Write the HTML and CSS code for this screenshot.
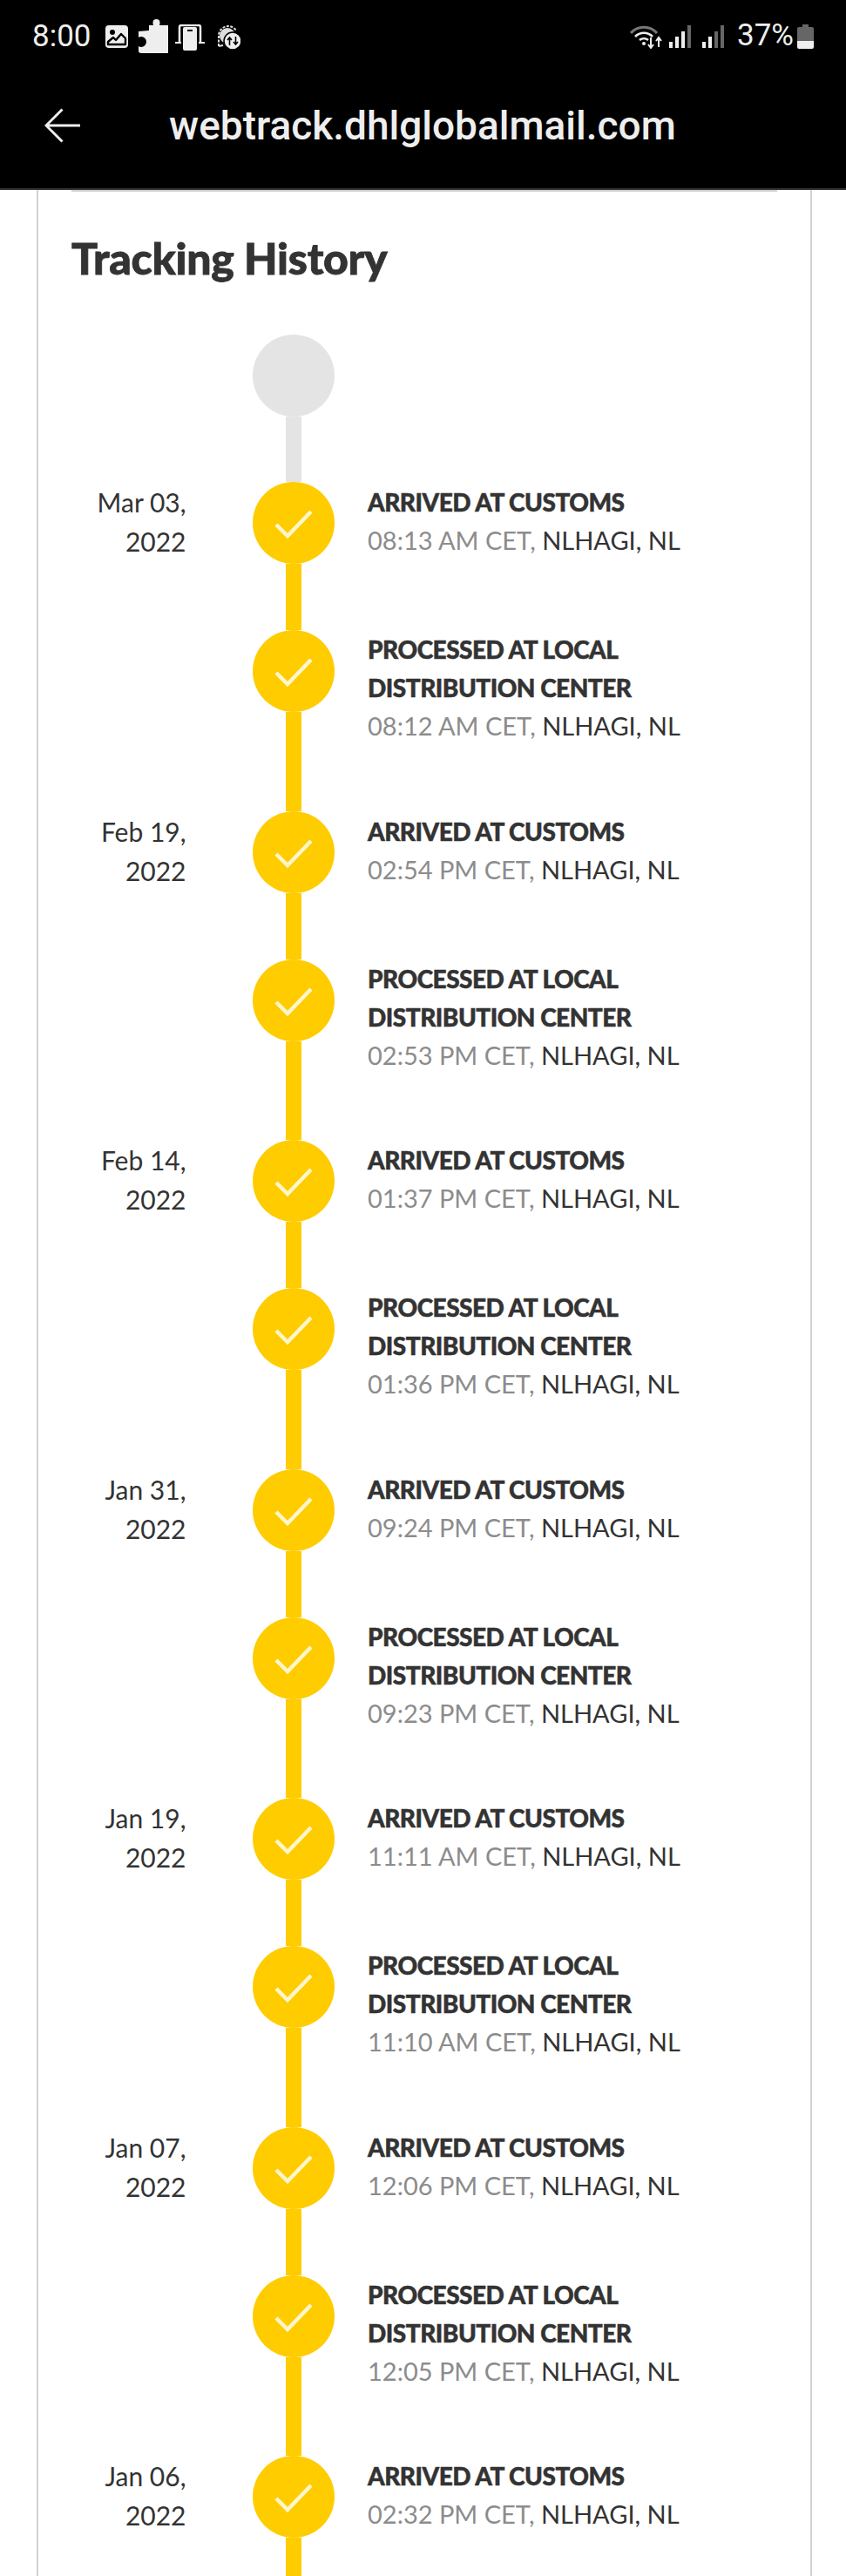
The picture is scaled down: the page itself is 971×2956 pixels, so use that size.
FILE: index.html
```html
<!DOCTYPE html>
<html lang="en">
<head>
<meta charset="utf-8">
<title>Tracking History</title>
<link rel="stylesheet" href="styles.css">
</head>
<body>
<header class="appbar">
  <div class="status">
    <div class="status-left">
      <span class="clock">8:00</span>
      <svg class="ico ico-img" viewBox="0 0 26 26"><rect width="26" height="26" rx="4" fill="#eee"/><circle cx="8" cy="8" r="3" fill="#000"/><path d="M3 22v-3l6-5 3 3 6-7 5 5v7z" fill="none" stroke="#000" stroke-width="2.4" stroke-linejoin="round"/></svg>
      <svg class="ico ico-puzzle" viewBox="0 0 34 39"><path d="M12 7h5a5.500 5.500 0 0 1-.5-3a4 4 0 0 1 8 0a5.500 5.500 0 0 1-.5 3h10v32H3a3 3 0 0 1-3-3v-5a6 6 0 0 0 3 1a6 6 0 0 0 0-12a6 6 0 0 0-3 1v-7l12-1z" fill="#eee"/></svg>
      <svg class="ico ico-phone" viewBox="0 0 34 30"><path d="M5 21V3a2 2 0 0 1 2-2h20a2 2 0 0 1 2 2v18" fill="none" stroke="#eee" stroke-width="2.500"/><rect x="9" y="3" width="16" height="27" rx="2" fill="#eee"/><rect x="14" y="6" width="6" height="2" fill="#000"/><path d="M0 21h7M27 21h7" stroke="#eee" stroke-width="2"/></svg>
      <svg class="ico ico-chat" viewBox="0 0 29 29"><path d="M4 25V13A11 11 0 0 1 15 2a11 11 0 0 1 9 5" fill="none" stroke="#ddd" stroke-width="2" stroke-dasharray="3 1.500"/><path d="M4 25l5-1" stroke="#ddd" stroke-width="2"/><circle cx="14" cy="13" r="9" fill="#ddd"/><circle cx="20" cy="19" r="10" fill="#eee" stroke="#000" stroke-width="1.500"/><path d="M16.500 24v-9m-2.500 3l2.500-3 2.500 3M23.500 14v9m-2.500-3l2.500 3 2.500-3" fill="none" stroke="#000" stroke-width="1.600"/></svg>
    </div>
    <div class="status-right">
      <svg class="ico ico-wifi" viewBox="0 0 39 28"><path d="M1 10a20 20 0 0 1 30 0" fill="none" stroke="#777" stroke-width="3"/><path d="M6 14a14 14 0 0 1 20 0M11 18a8 8 0 0 1 10 0" fill="none" stroke="#eee" stroke-width="2.600"/><circle cx="16" cy="22" r="2" fill="#eee"/><path d="M24 15v12m-3-4l3 4 3-4M33 26V15m-3 4l3-4 3 4" fill="none" stroke="#eee" stroke-width="2"/></svg>
      <svg class="ico ico-bars" viewBox="0 0 26 26"><rect x="0" y="19" width="4" height="7" fill="#eee"/><rect x="7" y="13" width="4" height="13" fill="#eee"/><rect x="14" y="7" width="4" height="19" fill="#eee"/><rect x="21" y="0" width="4" height="26" fill="#666"/></svg>
      <svg class="ico ico-bars2" viewBox="0 0 26 26"><rect x="0" y="19" width="4" height="7" fill="#eee"/><rect x="7" y="13" width="4" height="13" fill="#eee"/><rect x="14" y="7" width="4" height="19" fill="#666"/><rect x="21" y="0" width="4" height="26" fill="#666"/></svg>
      <span class="pct">37%</span>
      <svg class="ico ico-batt" viewBox="0 0 19 28"><path d="M6 0h7v3h4a2 2 0 0 1 2 2v14H0V5a2 2 0 0 1 2-2h4z" fill="#666"/><path d="M0 19h19v7a2 2 0 0 1-2 2H2a2 2 0 0 1-2-2z" fill="#eee"/></svg>
    </div>
  </div>
  <div class="nav">
    <svg class="back" viewBox="0 0 42 40"><path d="M21 1L2 20l19 19M2 20h40" fill="none" stroke="#eee" stroke-width="3"/></svg>
    <span class="site">webtrack.dhlglobalmail.com</span>
  </div>
</header>
<main class="card">
  <div class="edge"></div>
  <h1 class="heading">Tracking History</h1>
  <ol class="timeline">
    <li class="row row-start"><div class="date"></div><div class="rail"><span class="dot dot-grey"></span><span class="line line-grey"></span></div><div class="info"></div></li>

    <li class="row row-short"><div class="date">Mar 03,<br>2022</div><div class="rail"><span class="dot"><svg class="check" viewBox="0 0 94 94"><path d="M27 49l13 13 27-28"/></svg></span><span class="line"></span></div><div class="info"><p class="event">ARRIVED AT CUSTOMS</p><p class="meta"><span class="time">08:13 AM CET,</span> NLHAGI, NL</p></div></li>
    <li class="row row-tall"><div class="date"></div><div class="rail"><span class="dot"><svg class="check" viewBox="0 0 94 94"><path d="M27 49l13 13 27-28"/></svg></span><span class="line"></span></div><div class="info"><p class="event">PROCESSED AT LOCAL<br>DISTRIBUTION CENTER</p><p class="meta"><span class="time">08:12 AM CET,</span> NLHAGI, NL</p></div></li>

    <li class="row row-short"><div class="date">Feb 19,<br>2022</div><div class="rail"><span class="dot"><svg class="check" viewBox="0 0 94 94"><path d="M27 49l13 13 27-28"/></svg></span><span class="line"></span></div><div class="info"><p class="event">ARRIVED AT CUSTOMS</p><p class="meta"><span class="time">02:54 PM CET,</span> NLHAGI, NL</p></div></li>
    <li class="row row-tall"><div class="date"></div><div class="rail"><span class="dot"><svg class="check" viewBox="0 0 94 94"><path d="M27 49l13 13 27-28"/></svg></span><span class="line"></span></div><div class="info"><p class="event">PROCESSED AT LOCAL<br>DISTRIBUTION CENTER</p><p class="meta"><span class="time">02:53 PM CET,</span> NLHAGI, NL</p></div></li>

    <li class="row row-short"><div class="date">Feb 14,<br>2022</div><div class="rail"><span class="dot"><svg class="check" viewBox="0 0 94 94"><path d="M27 49l13 13 27-28"/></svg></span><span class="line"></span></div><div class="info"><p class="event">ARRIVED AT CUSTOMS</p><p class="meta"><span class="time">01:37 PM CET,</span> NLHAGI, NL</p></div></li>
    <li class="row row-tall"><div class="date"></div><div class="rail"><span class="dot"><svg class="check" viewBox="0 0 94 94"><path d="M27 49l13 13 27-28"/></svg></span><span class="line"></span></div><div class="info"><p class="event">PROCESSED AT LOCAL<br>DISTRIBUTION CENTER</p><p class="meta"><span class="time">01:36 PM CET,</span> NLHAGI, NL</p></div></li>

    <li class="row row-short"><div class="date">Jan 31,<br>2022</div><div class="rail"><span class="dot"><svg class="check" viewBox="0 0 94 94"><path d="M27 49l13 13 27-28"/></svg></span><span class="line"></span></div><div class="info"><p class="event">ARRIVED AT CUSTOMS</p><p class="meta"><span class="time">09:24 PM CET,</span> NLHAGI, NL</p></div></li>
    <li class="row row-tall"><div class="date"></div><div class="rail"><span class="dot"><svg class="check" viewBox="0 0 94 94"><path d="M27 49l13 13 27-28"/></svg></span><span class="line"></span></div><div class="info"><p class="event">PROCESSED AT LOCAL<br>DISTRIBUTION CENTER</p><p class="meta"><span class="time">09:23 PM CET,</span> NLHAGI, NL</p></div></li>

    <li class="row row-short"><div class="date">Jan 19,<br>2022</div><div class="rail"><span class="dot"><svg class="check" viewBox="0 0 94 94"><path d="M27 49l13 13 27-28"/></svg></span><span class="line"></span></div><div class="info"><p class="event">ARRIVED AT CUSTOMS</p><p class="meta"><span class="time">11:11 AM CET,</span> NLHAGI, NL</p></div></li>
    <li class="row row-tall"><div class="date"></div><div class="rail"><span class="dot"><svg class="check" viewBox="0 0 94 94"><path d="M27 49l13 13 27-28"/></svg></span><span class="line"></span></div><div class="info"><p class="event">PROCESSED AT LOCAL<br>DISTRIBUTION CENTER</p><p class="meta"><span class="time">11:10 AM CET,</span> NLHAGI, NL</p></div></li>

    <li class="row row-short"><div class="date">Jan 07,<br>2022</div><div class="rail"><span class="dot"><svg class="check" viewBox="0 0 94 94"><path d="M27 49l13 13 27-28"/></svg></span><span class="line"></span></div><div class="info"><p class="event">ARRIVED AT CUSTOMS</p><p class="meta"><span class="time">12:06 PM CET,</span> NLHAGI, NL</p></div></li>
    <li class="row row-tall"><div class="date"></div><div class="rail"><span class="dot"><svg class="check" viewBox="0 0 94 94"><path d="M27 49l13 13 27-28"/></svg></span><span class="line"></span></div><div class="info"><p class="event">PROCESSED AT LOCAL<br>DISTRIBUTION CENTER</p><p class="meta"><span class="time">12:05 PM CET,</span> NLHAGI, NL</p></div></li>

    <li class="row row-last"><div class="date">Jan 06,<br>2022</div><div class="rail"><span class="dot"><svg class="check" viewBox="0 0 94 94"><path d="M27 49l13 13 27-28"/></svg></span><span class="line"></span></div><div class="info"><p class="event">ARRIVED AT CUSTOMS</p><p class="meta"><span class="time">02:32 PM CET,</span> NLHAGI, NL</p></div></li>
  </ol>
</main>
</body>
</html>
```

FILE: styles.css
```css
* { box-sizing: border-box; }
html, body { margin: 0; padding: 0; background: #fff; }
body { width: 971px; height: 2956px; overflow: hidden; font-family: "Lato", "Liberation Sans", sans-serif; color: #333; }

.appbar { height: 218px; background: #000; border-bottom: 2px solid #333; color: #eee; font-family: "Roboto", sans-serif; }
.status { height: 64px; padding: 22px 37px 0 37px; display: flex; justify-content: space-between; align-items: flex-start; }
.status-left, .status-right { display: flex; align-items: flex-start; }
.clock { font-size: 35px; line-height: 40px; width: 84px; }
.pct { font-size: 35px; line-height: 38px; margin-left: 14px; width: 69px; white-space: nowrap; }
.ico { display: block; flex: none; }
.ico-img { width: 26px; height: 26px; margin-top: 7px; }
.ico-puzzle { width: 34px; height: 39px; margin: 0 0 0 12px; }
.ico-phone { width: 34px; height: 30px; margin: 6px 0 0 8px; }
.ico-chat { width: 29px; height: 29px; margin: 6px 0 0 12px; }
.ico-wifi { width: 39px; height: 28px; margin-top: 6px; }
.ico-bars { width: 26px; height: 26px; margin: 7px 0 0 6px; }
.ico-bars2 { width: 26px; height: 26px; margin: 7px 0 0 12px; }
.ico-batt { width: 19px; height: 28px; margin-top: 6px; }

.nav { display: flex; align-items: center; height: 60px; margin-top: 50px; padding-left: 51px; }
.back { width: 41px; height: 40px; flex: none; }
.site { font-size: 46px; line-height: 54px; font-weight: 500; margin-left: 102px; white-space: nowrap; }

.card { margin: 0 39px 0 42px; height: 2738px; border: solid #d2d2d4; border-width: 0 2px; padding: 0 0 0 38px; overflow: hidden; }
.edge { height: 2px; margin-right: 38px; background: #d2d2d4; }
.heading { margin: 48px 0 60px; font-size: 50px; line-height: 56px; font-weight: 900; letter-spacing: -0.3px; -webkit-text-stroke: 0.8px #333; color: #333; }

.timeline { list-style: none; margin: 0; padding: 0; }
.row { display: flex; }
.row-start { height: 169px; }
.row-short { height: 170px; }
.row-tall { height: 207.5px; }
.row-last { height: 300px; }

.date { width: 131.5px; flex: none; text-align: right; font-size: 30px; line-height: 45px; padding-top: 1px; font-weight: 400; color: #333; }
.rail { width: 94px; flex: none; margin-left: 76.5px; display: flex; flex-direction: column; align-items: center; }
.dot { width: 94px; height: 94px; flex: none; border-radius: 50%; background: #fc0; display: block; }
.dot-grey { background: #e4e4e4; }
.line { width: 18px; flex: 1; background: #fc0; display: block; }
.line-grey { background: #e4e4e4; }
.check { display: block; width: 94px; height: 94px; fill: none; stroke: #fff6cc; stroke-width: 4.5; }

.info { margin-left: 38px; flex: 1; }
.row-short .info, .row-last .info { padding-top: 1px; }
.event { margin: 0; font-size: 28px; line-height: 44px; font-weight: 900; letter-spacing: -0.5px; -webkit-text-stroke: 0.5px #333; color: #333; }
.meta { margin: 0; font-size: 29px; line-height: 44px; font-weight: 400; color: #333; }
.time { color: #8c8c8c; }
```
